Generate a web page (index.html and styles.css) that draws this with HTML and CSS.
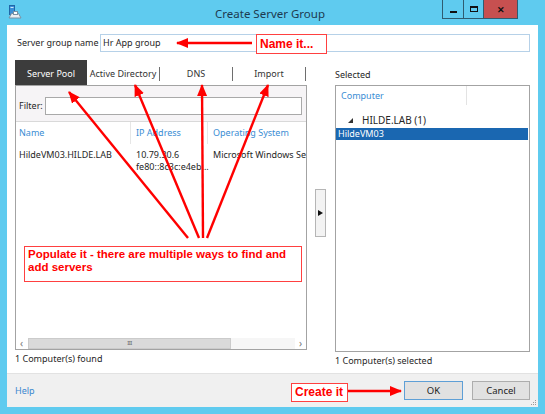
FILE: index.html
```html
<!DOCTYPE html>
<html lang="en">
<head>
    <meta charset="UTF-8">
    <title>Create Server Group</title>
    <link rel="stylesheet" href="styles.css">
</head>
<body>
<div class="window">
    <div class="titlebar">
        <svg class="app-icon" width="14" height="14" viewBox="0 0 14 14">
            <rect x="1.5" y="0.5" width="5" height="9" fill="#3a8fd6" stroke="#1f66a8"/>
            <rect x="2.5" y="2" width="3" height="1" fill="#cfe6f8"/>
            <path d="M3.5 8.5h7l2.5 4.5H1z" fill="#e9eef2" stroke="#7890a3"/>
            <rect x="5.5" y="6.5" width="4" height="3" fill="#fff" stroke="#7890a3"/>
        </svg>
        <div class="title">Create Server Group</div>
        <div class="caption-btns">
            <div class="cbtn min"><span></span></div>
            <div class="cbtn max"><span></span></div>
            <div class="cbtn close">✕</div>
        </div>
    </div>

    <div class="client">
        <div class="name-row">
            <label>Server group name</label>
            <div class="textbox">Hr App group</div>
        </div>

        <div class="main">
            <div class="left-col">
                <div class="tabs">
                    <div class="tab active">Server Pool</div>
                    <div class="tab">Active Directory</div>
                    <div class="tab">DNS</div>
                    <div class="tab">Import</div>
                </div>
                <div class="pool-box">
                    <div class="filter-bar">
                        <span class="filter-label">Filter:</span>
                        <div class="filter-input"></div>
                    </div>
                    <div class="list">
                        <div class="list-head">
                            <div class="c1">Name</div>
                            <div class="c2">IP Address</div>
                            <div class="c3">Operating System</div>
                        </div>
                        <div class="list-row">
                            <div class="c1">HildeVM03.HILDE.LAB</div>
                            <div class="c2">10.79.30.6<br>fe80::8c3c:e4eb...</div>
                            <div class="c3">Microsoft Windows Ser</div>
                        </div>
                    </div>
                    <div class="hscroll">
                        <div class="sb-arrow">&#8249;</div>
                        <div class="sb-thumb">III</div>
                        <div class="sb-track"></div>
                        <div class="sb-arrow">&#8250;</div>
                    </div>
                </div>
                <div class="status">1 Computer(s) found</div>
            </div>

            <div class="mover">
                <div class="move-btn"><span class="tri"></span></div>
            </div>

            <div class="right-col">
                <div class="sel-label">Selected</div>
                <div class="sel-box">
                    <div class="sel-head">
                        <div class="h1">Computer</div>
                        <div class="h2"></div>
                    </div>
                    <div class="group-row"><span class="twisty"></span>HILDE.LAB (1)</div>
                    <div class="sel-row">HildeVM03</div>
                </div>
                <div class="status">1 Computer(s) selected</div>
            </div>
        </div>

        <div class="footer">
            <a class="help">Help</a>
            <div class="spacer"></div>
            <button class="btn ok">OK</button>
            <button class="btn cancel">Cancel</button>
            <svg class="grip" width="7" height="7" viewBox="0 0 7 7">
                <rect x="5" y="1" width="1" height="1" fill="#9a9a9a"/>
                <rect x="3" y="3" width="1" height="1" fill="#9a9a9a"/>
                <rect x="5" y="3" width="1" height="1" fill="#9a9a9a"/>
                <rect x="1" y="5" width="1" height="1" fill="#9a9a9a"/>
                <rect x="3" y="5" width="1" height="1" fill="#9a9a9a"/>
                <rect x="5" y="5" width="1" height="1" fill="#9a9a9a"/>
            </svg>
        </div>
    </div>

    <!-- annotations drawn on top of the dialog -->
    <div class="annotations">
        <svg width="545" height="414" viewBox="0 0 545 414">
            <defs>
                <marker id="head" viewBox="0 0 12 10" refX="11" refY="5" markerWidth="12" markerHeight="10" markerUnits="userSpaceOnUse" orient="auto">
                    <path d="M0 0L12 5L0 10z" fill="#f00"/>
                </marker>
            </defs>
            <g stroke="#f00" stroke-width="2.4" marker-end="url(#head)">
                <line x1="252" y1="43" x2="177" y2="43"/>
                <line x1="348" y1="391" x2="401" y2="391"/>
                <line x1="188" y1="238" x2="69" y2="92"/>
                <line x1="199" y1="238" x2="135" y2="85"/>
                <line x1="203" y1="238" x2="202" y2="85"/>
                <line x1="207" y1="238" x2="268" y2="85"/>
            </g>
        </svg>
        <div class="note note-name">Name it...</div>
        <div class="note note-populate">Populate it - there are multiple ways to find and add servers</div>
        <div class="note note-create">Create it</div>
    </div>
</div>
</body>
</html>
```

FILE: styles.css
```css
* {
    box-sizing: border-box;
}
body {
    margin: 0;
    width: 545px;
    height: 414px;
    overflow: hidden;
    background: #5fcbef;
    font-family: "Noto Sans", "Liberation Sans", sans-serif;
    font-size: 9px;
    color: #262626;
}
.window {
    position: relative;
    height: 414px;
    padding: 0 7px 7px 7px;
    display: flex;
    flex-direction: column;
    background: #5fcbef;
}

/* title bar */
.titlebar {
    height: 25px;
    flex-shrink: 0;
    display: flex;
    align-items: flex-start;
}
.app-icon {
    margin: 5px 0 0 1px;
}
.title {
    flex: 1;
    padding-left: 76px;
    text-align: center;
    line-height: 28px;
    font-size: 11.5px;
    color: #1d3a50;
}
.caption-btns {
    display: flex;
    height: 19px;
    margin-right: 20px;
    border-right: 1px solid #2f5c70;
    border-bottom: 1px solid #2f5c70;
}
.cbtn {
    border-left: 1px solid #2f5c70;
    display: flex;
    align-items: center;
    justify-content: center;
}
.cbtn.min {
    width: 21px;
}
.cbtn.min span {
    width: 7px;
    height: 2px;
    margin-top: 5px;
    background: #111;
}
.cbtn.max {
    width: 20px;
}
.cbtn.max span {
    width: 8px;
    height: 6px;
    border: 1px solid #111;
    border-top-width: 2px;
}
.cbtn.close {
    width: 34px;
    background: #c75050;
    color: #111;
    font-size: 9px;
    font-weight: bold;
}

/* dialog body */
.client {
    flex: 1;
    background: #fff;
    display: flex;
    flex-direction: column;
}
.name-row {
    display: flex;
    padding: 9px 8px 0 10px;
}
.name-row label {
    width: 83px;
    flex-shrink: 0;
    white-space: nowrap;
    line-height: 18px;
}
.textbox {
    flex: 1;
    height: 18px;
    border: 1px solid #b6d1e8;
    padding-left: 2px;
    line-height: 16px;
}

.main {
    flex: 1;
    display: flex;
    padding: 8px 8px 0 8px;
}
.left-col {
    width: 292px;
}
.tabs {
    display: flex;
    align-items: flex-start;
    height: 25px;
}
.tab {
    width: 73px;
    height: 14px;
    margin-top: 7px;
    line-height: 14px;
    text-align: center;
    white-space: nowrap;
    color: #333;
    border-right: 1px solid #6e6e6e;
}
.tab.active {
    width: 72px;
    height: 25px;
    margin-top: 0;
    padding-top: 7px;
    background: #3c3c3c;
    color: #fff;
    border-right: none;
}

.pool-box {
    height: 265px;
    border: 1px solid #a3a3a3;
    display: flex;
    flex-direction: column;
}
.filter-bar {
    height: 35px;
    display: flex;
    padding: 11px 4px 0 3px;
    background: #f6f4f6;
}
.filter-label {
    width: 26px;
    line-height: 18px;
}
.filter-input {
    flex: 1;
    height: 18px;
    background: #fff;
    border: 1px solid #a9a9a9;
}
.list {
    flex: 1;
    border-top: 1px solid #d9d9d9;
    overflow: hidden;
}
.list-head,
.list-row {
    display: flex;
}
.list-head {
    height: 22px;
    line-height: 22px;
    color: #3a8dd4;
}
.list-row {
    padding-top: 5px;
    line-height: 12px;
}
.c1 {
    width: 115px;
    padding-left: 3px;
}
.c2 {
    width: 77px;
    padding-left: 5px;
}
.c3 {
    flex: 1;
    padding-left: 5px;
    white-space: nowrap;
    overflow: hidden;
}
.list-head .c1,
.list-head .c2 {
    border-right: 1px solid #e6e6e6;
}

.hscroll {
    height: 11px;
    display: flex;
    background: #fff;
}
.sb-arrow {
    width: 11px;
    text-align: center;
    line-height: 10px;
    font-size: 10px;
    color: #777;
}
.sb-thumb {
    width: 203px;
    margin-left: 1px;
    background: #dadada;
    border: 1px solid #cbcbcb;
    text-align: center;
    font-size: 6px;
    line-height: 9px;
    color: #666;
    letter-spacing: -0.5px;
}
.sb-track {
    flex: 1;
    background: #f6f6f6;
}

.status {
    margin-top: 3px;
    line-height: 12px;
}

.mover {
    width: 28px;
    padding-left: 8px;
}
.move-btn {
    margin-top: 129px;
    width: 11px;
    height: 48px;
    background: #f3f3f3;
    border: 1px solid #b5b5b5;
    display: flex;
    align-items: center;
    justify-content: center;
}
.tri {
    border-left: 5px solid #111;
    border-top: 3.5px solid transparent;
    border-bottom: 3.5px solid transparent;
}

.right-col {
    width: 195px;
}
.sel-label {
    height: 25px;
    padding-top: 9px;
    line-height: 12px;
}
.sel-box {
    height: 267px;
    border: 1px solid #a3a3a3;
}
.sel-head {
    display: flex;
    height: 19px;
}
.sel-head .h1 {
    width: 131px;
    padding-left: 5px;
    line-height: 19px;
    color: #3a8dd4;
    border-right: 1px solid #e3e3e3;
}
.group-row {
    margin-top: 9px;
    height: 12px;
    line-height: 12px;
    padding-left: 12px;
    display: flex;
    align-items: center;
    font-size: 10px;
}
.twisty {
    width: 0;
    height: 0;
    border-left: 5px solid transparent;
    border-bottom: 5px solid #333;
    margin-right: 9px;
}
.sel-row {
    margin: 2px 1px 0 0;
    height: 12px;
    line-height: 12px;
    padding-left: 2px;
    background: #1a67b1;
    color: #fff;
}

/* footer */
.footer {
    position: relative;
    height: 34px;
    flex-shrink: 0;
    display: flex;
    align-items: center;
    padding: 0 8px;
    background: #f0f0f0;
    border-top: 1px solid #e2e2e2;
}
.help {
    color: #3a87cf;
}
.spacer {
    flex: 1;
}
.btn {
    width: 59px;
    height: 19px;
    padding: 0;
    font-family: inherit;
    font-size: 9.5px;
    color: #222;
    background: #e1e1e1;
    border: 1px solid #adadad;
}
.btn.ok {
    border-color: #5e9fd6;
}
.btn.cancel {
    width: 58px;
    margin-left: 9px;
}
.grip {
    position: absolute;
    right: 1px;
    bottom: 1px;
}

/* red call-outs laid over the screenshot */
.annotations {
    position: absolute;
    left: 0;
    top: 0;
    width: 545px;
    height: 414px;
    pointer-events: none;
}
.annotations svg {
    position: absolute;
    left: 0;
    top: 0;
}
.note {
    position: absolute;
    background: #fff;
    border: 1px solid #ff4040;
    color: #f00;
    font-family: "Liberation Sans", Arial, sans-serif;
    font-weight: bold;
    font-size: 12px;
    padding-left: 3px;
}
.note-name {
    left: 256px;
    top: 34px;
    width: 71px;
    height: 20px;
    line-height: 18px;
}
.note-populate {
    left: 24px;
    top: 246px;
    width: 278px;
    height: 36px;
    font-size: 11.5px;
    line-height: 12.5px;
    padding-top: 1px;
}
.note-create {
    left: 291px;
    top: 383px;
    width: 57px;
    height: 19px;
    line-height: 17px;
}
```
